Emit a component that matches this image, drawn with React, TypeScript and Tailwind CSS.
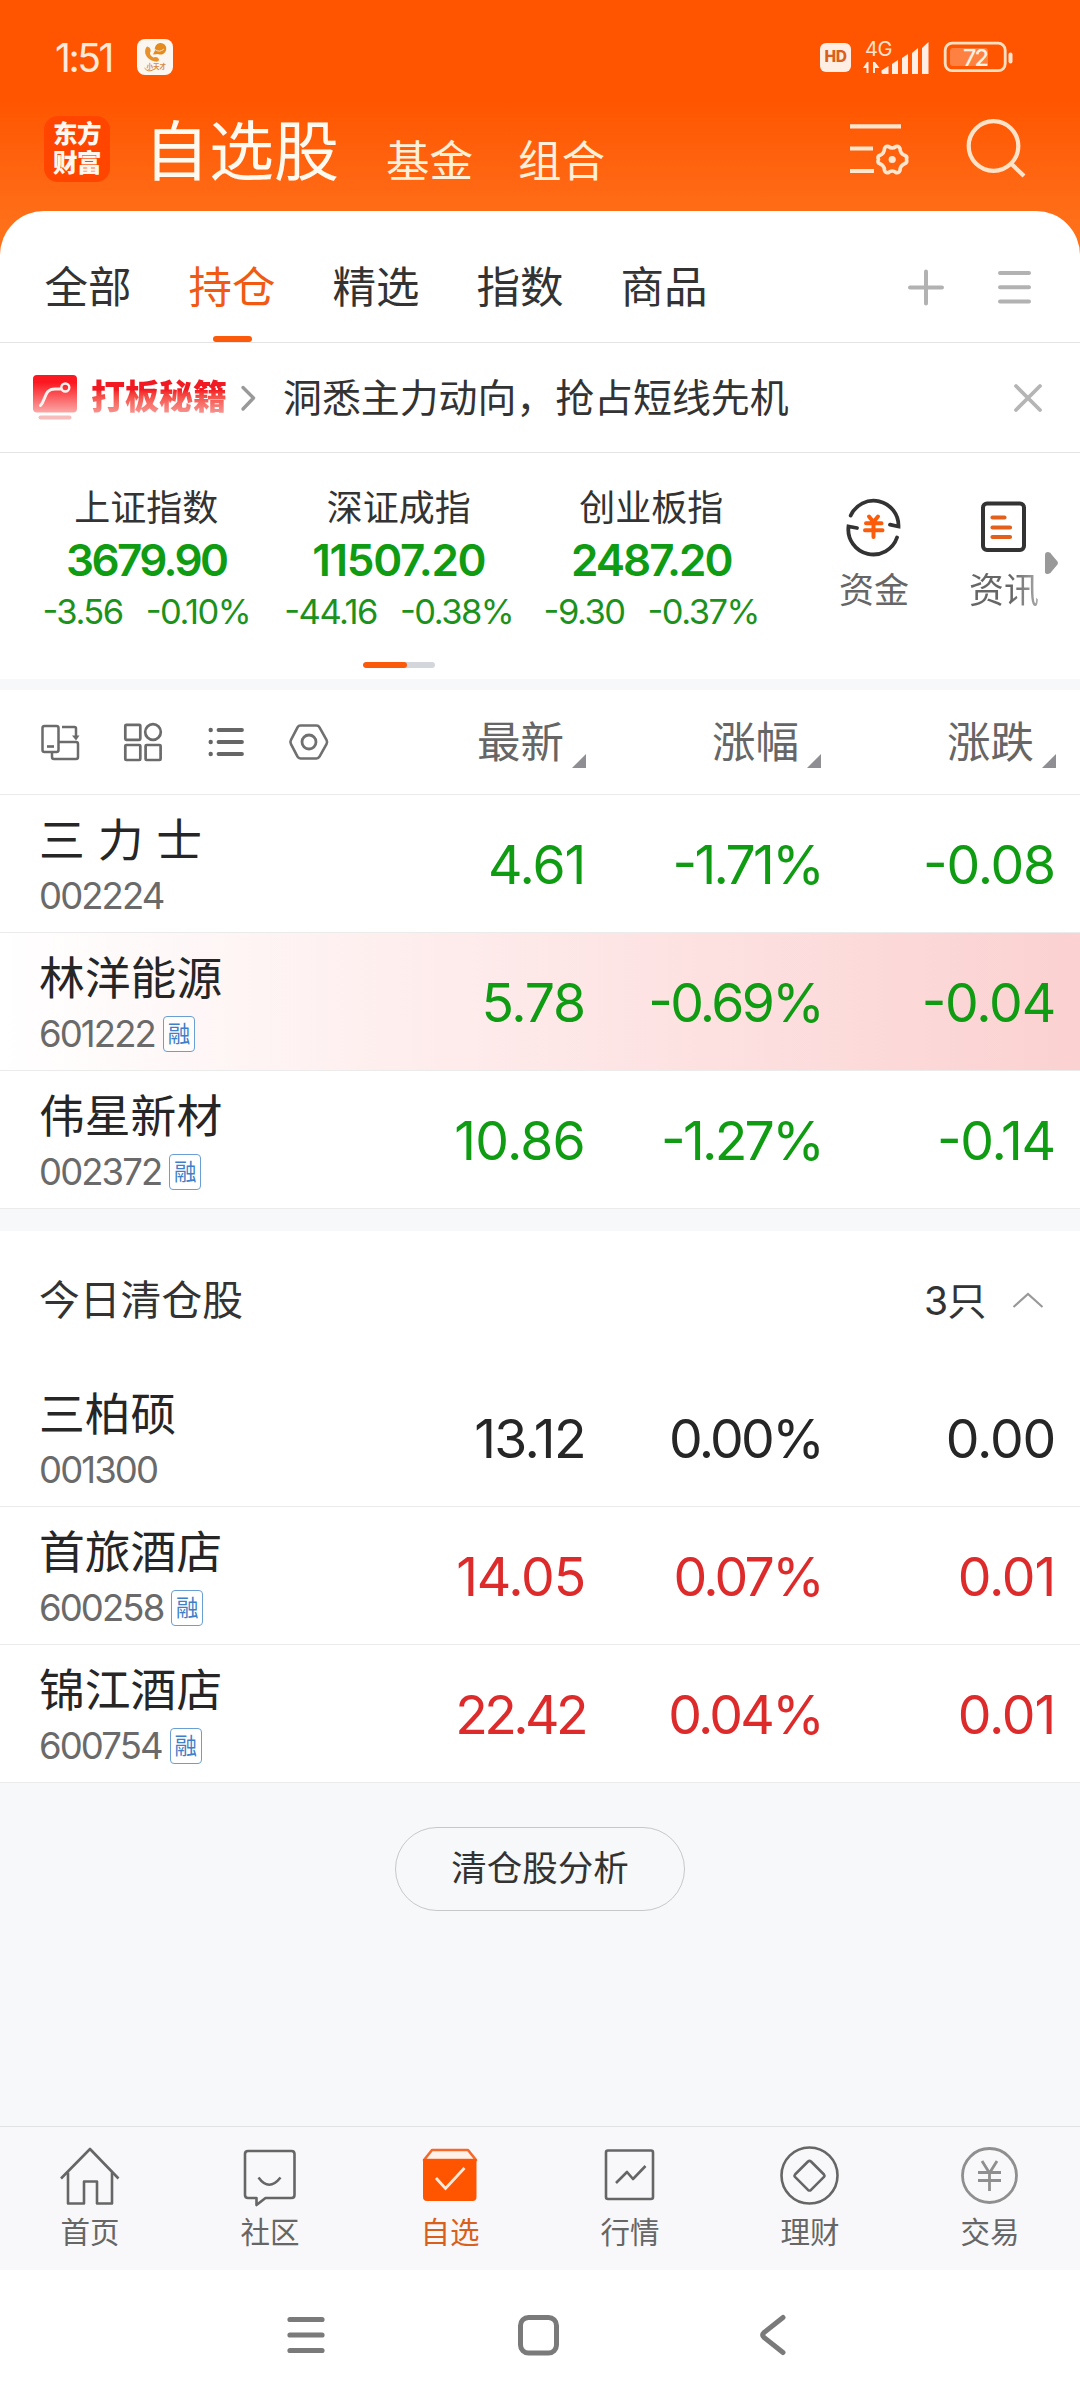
import React from "react";

type Tone = "down" | "flat" | "up";

interface Stock {
  name: string;
  code: string;
  margin?: boolean;
  last: string;
  pct: string;
  diff: string;
  tone: Tone;
  flash?: boolean;
  lastTracking?: string;
}

const holdings: Stock[] = [
  { name: "三 力 士", code: "002224", last: "4.61", pct: "-1.71%", diff: "-0.08", tone: "down" },
  { name: "林洋能源", code: "601222", margin: true, last: "5.78", pct: "-0.69%", diff: "-0.04", tone: "down", flash: true },
  { name: "伟星新材", code: "002372", margin: true, last: "10.86", pct: "-1.27%", diff: "-0.14", tone: "down", lastTracking: "tracking-[-0.8px]" },
];

const cleared: Stock[] = [
  { name: "三柏硕", code: "001300", last: "13.12", pct: "0.00%", diff: "0.00", tone: "flat", lastTracking: "tracking-[-1.6px]" },
  { name: "首旅酒店", code: "600258", margin: true, last: "14.05", pct: "0.07%", diff: "0.01", tone: "up" },
  { name: "锦江酒店", code: "600754", margin: true, last: "22.42", pct: "0.04%", diff: "0.01", tone: "up", lastTracking: "tracking-[-3.6px]" },
];

const toneClass: Record<Tone, string> = {
  down: "text-[#0f9b12]",
  flat: "text-[#262626]",
  up: "text-[#dd2a2a]",
};

interface GlyphProps {
  w: number;
  h: number;
  className?: string;
  children: React.ReactNode;
}

function Glyph({ w, h, className = "", children }: GlyphProps) {
  return (
    <svg width={w} height={h} viewBox={`0 0 ${w} ${h}`} fill="none" className={`block shrink-0 overflow-visible ${className}`}>
      {children}
    </svg>
  );
}

function StatusBar() {
  return (
    <div className="flex h-[100px] items-center pt-[14px] text-[#ffe9dc]">
      <span className="ml-[55px] w-[65px] whitespace-nowrap text-[39px] leading-none tracking-[-2.4px]">1:51</span>
      <Glyph w={36} h={36} className="ml-[17px]">
        <rect width="36" height="36" rx="8" fill="#fbf6f0" />
        <path d="M10 7.500c-3.500 4-2 10 3 13 4 2.500 8.500 3 9 .5 0-2.500-3.500-4-5.500-2.500-2.500-1-4-3.500-3.500-5 2-2-.500-6-3-6Z" fill="#e8902a" />
        <path d="M23 4a5.800 5.800 0 1 1-2 11l-5 .5 2-4a6 6 0 0 1 5-7.500Z" fill="#e58a1c" />
        <path d="M18 10.500q4.500 3.500 9-.500" stroke="#fbe2c0" strokeWidth="1" />
        <text x="9.500" y="30" fontSize="6.500" fontWeight="700" fill="#d98a3a" fontFamily="Noto Sans CJK SC">小天才</text>
        <path d="M7.500 29q4 5 9 1.500" stroke="#d98a3a" strokeWidth="1" />
      </Glyph>
      <div className="ml-[647px] flex h-[29px] w-[31px] items-center justify-center rounded-[6px] bg-[#ffeee4] text-[15.500px] font-extrabold leading-none tracking-[-0.3px] text-[#d9601c]">
        HD
      </div>
      <Glyph w={67} h={33} className="ml-[12px]">
        <text x="2" y="14.500" fontSize="20" fill="#ffe3cf" fontFamily="Inter" letterSpacing="-0.500">4G</text>
        <path d="M5.500 21v11h-2v-5L0 27l4-6ZM10 32V21h2l4.500 6H12v5Z" fill="#ffeee4" />
        <path d="M18.500 32v-2.500l7-4.500V33h-6ZM29 33V23l6-4v14ZM39 33V17l6-4v20ZM49 33V12l6-5v26ZM59 33V7l6.500-6v32Z" fill="#ffeee4" />
      </Glyph>
      <Glyph w={70} h={30} className="ml-[14px]">
        <rect x="1.200" y="1.200" width="60" height="27.500" rx="7" stroke="#ffdfc2" strokeWidth="2.800" />
        <rect x="6" y="6" width="38" height="18" rx="3" fill="#ff8141" />
        <path d="M66.500 12.500v7" stroke="#ffe3cf" strokeWidth="4" strokeLinecap="round" />
        <text x="31" y="23.500" fontSize="23.500" fontWeight="500" textAnchor="middle" fill="#fff1e4" fontFamily="Inter" letterSpacing="-2">72</text>
      </Glyph>
    </div>
  );
}

function TitleBar() {
  return (
    <div className="flex h-[111px] items-start">
      <div className="ml-[44px] mt-4 flex h-[66px] w-[66px] flex-col items-center justify-center gap-[2px] rounded-[14px] bg-[#ff4500] text-[24.500px] font-black text-[#fff8f0]">
        <span className="leading-[27px] tracking-[-0.5px]">东方</span>
        <span className="leading-[27px] tracking-[-0.5px]">财富</span>
      </div>
      <span className="ml-[34px] mt-[19px] w-[200px] whitespace-nowrap text-[65px] leading-none text-[#fffaf0]">自选股</span>
      <span className="ml-[42px] mt-[40px] w-[88px] whitespace-nowrap text-[43.500px] leading-none text-[#fff0da]">基金</span>
      <span className="ml-[44px] mt-[40px] w-[88px] whitespace-nowrap text-[43.500px] leading-none text-[#fff0da]">组合</span>
      <Glyph w={59} h={51} className="ml-[244px] mt-[24px]">
        <path d="M0 2.300h51M0 24.500h23M0 47h24" stroke="#ffe6cf" strokeWidth="4.200" />
        <path
          d="M38.500 22.500Q42.200 25.500 46 22.500Q48.500 21.500 50 24.500Q50 29.500 55 31.500Q57.500 32.500 56.500 35.500Q57.500 38.500 55 39.500Q50 41.500 50 46.500Q48.500 49.500 46 48.500Q42.200 45.500 38.500 48.500Q36 49.500 34.500 46.500Q34.500 41.500 29.500 39.500Q27 38.500 28.500 35.500Q27 32.500 29.500 31.500Q34.500 29.500 34.500 24.500Q36 21.500 38.500 22.500Z"
          stroke="#ffe6cf"
          strokeWidth="3.600"
          strokeLinejoin="round"
        />
        <circle cx="42.200" cy="35.500" r="3.600" fill="#ffe6cf" />
      </Glyph>
      <Glyph w={60} h={60} className="ml-[58px] mt-[18px]">
        <circle cx="26.500" cy="28" r="24.800" stroke="#ffe3c9" strokeWidth="4.200" />
        <path d="m43.500 45 13.500 13" stroke="#ffe3c9" strokeWidth="4.200" />
      </Glyph>
    </div>
  );
}

function GroupTabs() {
  const tabs = ["全部", "持仓", "精选", "指数", "商品"];
  return (
    <div className="flex h-[132px] border-b border-[#e4e4e4] pl-[16px]">
      {tabs.map((tab) => {
        const active = tab === "持仓";
        return (
          <div key={tab} className={`relative flex w-[144px] justify-center pt-[55px] text-[43.500px] leading-none ${active ? "text-[#f05a12]" : "text-[#333]"}`}>
            {tab}
            {active && <div className="absolute bottom-0 left-[53px] h-[6px] w-[39px] rounded-[3px] bg-[#fa5a0a]" />}
          </div>
        );
      })}
      <Glyph w={36} h={36} className="ml-[172px] mt-[58px]">
        <path d="M2 18.500h32M18 2.500v32" stroke="#b2b2b2" strokeWidth="4" strokeLinecap="round" />
      </Glyph>
      <Glyph w={34} h={36} className="ml-[54px] mt-[58px]">
        <path d="M2 4h29M2 18.300h29M2 32.600h29" stroke="#b2b2b2" strokeWidth="4" strokeLinecap="round" />
      </Glyph>
    </div>
  );
}

function PromoBar() {
  return (
    <div className="flex h-[110px] items-start border-b border-[#e4e4e4]">
      <Glyph w={45} h={46} className="ml-[33px] mt-[32px]">
        <defs>
          <linearGradient id="promo" x1="0" y1="0" x2="0" y2="1">
            <stop offset="0.200" stopColor="#fb1820" />
            <stop offset="1" stopColor="#fba8a6" />
          </linearGradient>
        </defs>
        <rect width="44" height="37.500" rx="4" fill="url(#promo)" />
        <path d="M7.500 30.500C13 25 11 14 22 14h6" stroke="#fff3f0" strokeWidth="3" strokeLinecap="round" />
        <circle cx="32.300" cy="12.500" r="4" stroke="#fff3f0" strokeWidth="2.400" />
        <rect x="5.500" y="40.500" width="33" height="4" rx="2" fill="#f7bcbc" />
      </Glyph>
      <span className="ml-[13px] mt-[36px] w-[138px] whitespace-nowrap bg-gradient-to-b from-[#f21a22] from-30% to-[#f79a98] bg-clip-text text-[34px] font-black leading-[36px] text-transparent">
        打板秘籍
      </span>
      <Glyph w={15} h={26} className="ml-[12px] mt-[42px]">
        <path d="m2 2.500 10.500 10.500L2 24" stroke="#999" strokeWidth="3.400" strokeLinecap="round" strokeLinejoin="round" />
      </Glyph>
      <span className="ml-[27px] mt-[36px] w-[510px] whitespace-nowrap text-[38.900px] leading-none text-[#333]">洞悉主力动向，抢占短线先机</span>
      <Glyph w={28} h={28} className="ml-[221px] mt-[41px]">
        <path d="M2 2 26 26M26 2 2 26" stroke="#b5b5b5" strokeWidth="3.800" strokeLinecap="round" />
      </Glyph>
    </div>
  );
}

const indices = [
  { name: "上证指数", value: "3679.90", diff: "-3.56", pct: "-0.10%", tracking: "tracking-[-2.6px]" },
  { name: "深证成指", value: "11507.20", diff: "-44.16", pct: "-0.38%", tracking: "tracking-[-1.3px]" },
  { name: "创业板指", value: "2487.20", diff: "-9.30", pct: "-0.37%", tracking: "tracking-[-2px]" },
];

function IndexStrip() {
  return (
    <div className="flex h-[226px] items-start">
      <div className="flex h-full w-[798px] flex-col overflow-hidden pl-[20px]">
        <div className="flex h-[209px]">
          {indices.map((item) => (
            <div key={item.name} className="flex w-[252.500px] shrink-0 flex-col items-center">
              <span className="mt-[37px] text-[36px] leading-none text-[#333]">{item.name}</span>
              <span className={`mt-[10px] whitespace-nowrap text-[44px] font-semibold leading-[48px] text-[#0f9b12] ${item.tracking}`}>{item.value}</span>
              <span className="mt-[10px] flex gap-[23px] whitespace-nowrap text-[34.500px] leading-[36px] tracking-[-1.5px] text-[#1c921d] [font-feature-settings:'case']">
                <span>{item.diff}</span>
                <span>{item.pct}</span>
              </span>
            </div>
          ))}
          <div className="ml-[20px] mt-[166px] h-[3px] w-px bg-[#5fb060]" />
        </div>
        <div className="ml-[343px] h-[6px] w-[72px] shrink-0 overflow-hidden rounded-full bg-[#d3d6da]">
          <div className="h-full w-[44px] rounded-full bg-[#fa5a0a]" />
        </div>
      </div>
      <div className="ml-[40px] flex w-[72px] flex-col items-center pt-[44px]">
        <Glyph w={58} h={58}>
          <path d="M5.700 18.500A25 25 0 0 1 53.500 29.500L45 27.700M52 40.500A25 25 0 0 1 3.500 29.500L12 31" stroke="#333" strokeWidth="3.800" strokeLinecap="round" strokeLinejoin="miter" />
          <path d="m24 19.500 4.500 5.500L33 19.500M21 26.300h15.500M20 33.300h17.500M28.500 26.300V40" stroke="#fb5c0c" strokeWidth="4" strokeLinecap="round" />
        </Glyph>
        <span className="mt-[18px] whitespace-nowrap text-[35px] leading-none text-[#666]">资金</span>
      </div>
      <div className="ml-[58px] flex w-[72px] flex-col items-center pt-[44px]">
        <Glyph w={58} h={58}>
          <rect x="8" y="6.500" width="41" height="46.500" rx="4" stroke="#333" strokeWidth="4" />
          <path d="M17.500 20.500h12M17.500 30.500h17.500M17.500 40h17.500" stroke="#e2601c" strokeWidth="4.200" strokeLinecap="round" />
        </Glyph>
        <span className="mt-[18px] whitespace-nowrap bg-gradient-to-r from-[#666] from-60% to-[#aaa] bg-clip-text text-[35px] leading-none text-transparent">资讯</span>
      </div>
      <Glyph w={14} h={23} className="ml-[5px] mt-[99px]">
        <path d="M0 3Q0 0 3 0 5.500 0 7 3l5.500 6.500q1 1.500 0 3L7 19q-1.500 3-4 3Q0 22 0 20Z" fill="#999" />
      </Glyph>
    </div>
  );
}

function Heading({ label, className }: { label: string; className: string }) {
  return (
    <div className={`flex items-start ${className}`}>
      <span className="mt-[31px] w-[88px] whitespace-nowrap text-[43.500px] leading-none text-[#666]">{label}</span>
      <Glyph w={14} h={14} className="ml-[7px] mt-[64px]">
        <path d="M14 0v14H0Z" fill="#8e8e93" />
      </Glyph>
    </div>
  );
}

function TableHead() {
  return (
    <div className="flex h-[105px] items-start border-b border-[#ebebeb]">
      <Glyph w={40} h={40} className="ml-[40px] mt-[33px]">
        <g stroke="#6b6b6b" strokeWidth="2.500">
          <rect x="2.500" y="3" width="16" height="26" rx="2" />
          <path d="M7 23.500h7" strokeWidth="2.600" />
          <path d="M22 4h12.500q1.500 0 1.500 1.500V13" />
          <path d="M19 19h17q2 0 2 2v13q0 2-2 2H14q-2 0-2-2v-5" />
        </g>
        <path d="M32 12.500h7.500L36 17.500Z" fill="#6b6b6b" />
      </Glyph>
      <Glyph w={40} h={40} className="ml-[43px] mt-[32px]">
        <g stroke="#6b6b6b" strokeWidth="2.700">
          <rect x="2.300" y="2.800" width="15" height="15" rx="1" />
          <circle cx="30" cy="10" r="7.800" />
          <rect x="2.300" y="23" width="15" height="15" rx="1" />
          <rect x="22.600" y="23" width="15" height="15" rx="1" />
        </g>
      </Glyph>
      <Glyph w={36} h={32} className="ml-[45px] mt-[36px]">
        <path d="M10.500 4h23.500M10.500 16h23.500M10.500 28h23.500" stroke="#666" strokeWidth="3.800" strokeLinecap="round" />
        <path d="M2.700 4h.01M2.700 16h.01M2.700 28h.01" stroke="#666" strokeWidth="4.400" strokeLinecap="round" />
      </Glyph>
      <Glyph w={40} h={38} className="ml-[45px] mt-[33px]">
        <path d="M11.500 2.500h16q2 0 3 1.800l7 12.500q1.200 2.200 0 4.400l-7 12.500q-1 1.800-3 1.800h-16q-2 0-3-1.800l-6.500-12.500q-1.200-2.200 0-4.400l6.500-12.500q1-1.800 3-1.800Z" stroke="#707070" strokeWidth="2.600" />
        <circle cx="20" cy="19" r="7" stroke="#707070" strokeWidth="2.800" />
      </Glyph>
      <Heading label="最新" className="ml-[148px]" />
      <Heading label="涨幅" className="ml-[126px]" />
      <Heading label="涨跌" className="ml-[126px]" />
    </div>
  );
}

function StockRow({ stock }: { stock: Stock }) {
  const tone = toneClass[stock.tone];
  return (
    <div className={`flex h-[138px] items-start border-b border-[#ebebeb] ${stock.flash ? "bg-gradient-to-r from-white to-[#fbd1d1]" : "bg-white"}`}>
      <div className="w-[300px] pl-[39px]">
        <div className="mt-[23px] whitespace-nowrap text-[45.800px] leading-none text-[#262626]">{stock.name}</div>
        <div className="mt-[13px] flex h-[38px] items-center">
          <span className="text-[36.500px] leading-none tracking-[-1.9px] text-[#6a6a6a]">{stock.code}</span>
          {stock.margin && (
            <span className="ml-[8px] flex h-[36px] w-[32px] items-center justify-center rounded-[4px] border-[1.500px] border-[#6a9fd4] bg-white/60 text-[22.500px] leading-none text-[#3f7fc8]">
              融
            </span>
          )}
        </div>
      </div>
      <span className={`mt-[43px] w-[285px] whitespace-nowrap text-right text-[53.500px] leading-none ${stock.lastTracking ?? "tracking-[-1.2px]"} ${tone}`}>{stock.last}</span>
      <span className={`mt-[43px] w-[237px] whitespace-nowrap text-right text-[53.500px] leading-none tracking-[-2.7px] [font-feature-settings:'case'] ${tone}`}>{stock.pct}</span>
      <span className={`mt-[43px] w-[233px] whitespace-nowrap text-right text-[53.500px] leading-none tracking-[-1.2px] [font-feature-settings:'case'] ${tone}`}>{stock.diff}</span>
    </div>
  );
}

function ClearedHead() {
  return (
    <div className="flex h-[138px] items-start">
      <span className="ml-[39px] mt-[49px] w-[210px] whitespace-nowrap text-[40.800px] leading-none text-[#333]">今日清仓股</span>
      <span className="ml-[675px] mt-[50px] w-[64px] whitespace-nowrap text-[39px] leading-none tracking-[-0.5px] text-[#333]">3只</span>
      <Glyph w={32} h={16} className="ml-[24px] mt-[61px]">
        <path d="M1.500 15 16 2l14.500 13" stroke="#999" strokeWidth="2.200" />
      </Glyph>
    </div>
  );
}

const navItems: { label: string; icon: React.ReactNode }[] = [
  {
    label: "首页",
    icon: (
      <g stroke="#666" strokeWidth="2.600" strokeLinejoin="round">
        <path d="M1 32.500 30 3l28.500 29.500" />
        <path d="M8 26.500V57.500h16V35.500h13v22h15V26.500" />
      </g>
    ),
  },
  {
    label: "社区",
    icon: (
      <g stroke="#666" strokeWidth="2.600" strokeLinejoin="round">
        <path d="M8 5h43.500q3 0 3 3v41q0 3-3 3H25.500l-9 7v-7H8q-3 0-3-3V8q0-3 3-3Z" />
        <path d="M18.500 31.500q10.500 14.500 22 0" />
      </g>
    ),
  },
  {
    label: "自选",
    icon: (
      <g>
        <path d="M4 14 12 4h36l8 10Z" stroke="#f5692a" strokeWidth="2.600" strokeLinejoin="round" fill="#fff1ea" />
        <path d="M3 13h53.500v38q0 4-4 4h-45.500q-4 0-4-4Z" fill="#ff5500" />
        <path d="m16 32 9.500 10.500L44.500 22" stroke="#ffeadb" strokeWidth="2.800" />
      </g>
    ),
  },
  {
    label: "行情",
    icon: (
      <g stroke="#666" strokeWidth="2.600" strokeLinejoin="round">
        <rect x="6" y="4.500" width="47" height="48.500" rx="2" />
        <path d="m16 37 11-11 6 7 12.500-13" />
      </g>
    ),
  },
  {
    label: "理财",
    icon: (
      <g stroke="#666" strokeWidth="2.600" strokeLinejoin="round">
        <circle cx="29.500" cy="29.500" r="28" />
        <path d="m28 15.500q1.500-1.200 3 0l13 13q1 1.200 0 2.400l-13 13q-1.500 1.200-3 0l-13-13q-1-1.200 0-2.400Z" />
      </g>
    ),
  },
  {
    label: "交易",
    icon: (
      <g stroke="#8f8f8f" strokeWidth="2.800">
        <circle cx="29.500" cy="29.500" r="27" />
        <path d="m22 15 7.500 12 7.500-12M18 26.500h23M18 34.500h23M29.500 26v19" />
      </g>
    ),
  },
];

function BottomNav() {
  return (
    <div className="flex h-[144px] border-t border-[#e1e2e4] bg-[#f8f8fa]">
      {navItems.map((item) => (
        <div key={item.label} className="flex w-[180px] flex-col items-center pt-[19px]">
          <Glyph w={60} h={60}>{item.icon}</Glyph>
          <span className={`mt-[12px] text-[29.500px] leading-none ${item.label === "自选" ? "text-[#d9601c]" : "text-[#666]"}`}>{item.label}</span>
        </div>
      ))}
    </div>
  );
}

function SystemNav() {
  return (
    <div className="flex h-[130px] items-start bg-white">
      <Glyph w={40} h={42} className="ml-[286px] mt-[44px]">
        <path d="M4 5.500h32M4 21h32M4 36.500h32" stroke="#7a7a7a" strokeWidth="5.200" strokeLinecap="round" />
      </Glyph>
      <Glyph w={42} h={42} className="ml-[192px] mt-[44px]">
        <rect x="2.500" y="3.500" width="36" height="35.500" rx="8" stroke="#7a7a7a" strokeWidth="5" />
      </Glyph>
      <Glyph w={28} h={42} className="ml-[199px] mt-[44px]">
        <path d="M24 3.500 5 18.500Q2.500 21 5 23.500L24 38.500" stroke="#7a7a7a" strokeWidth="5" strokeLinecap="round" />
      </Glyph>
    </div>
  );
}

export default function App() {
  return (
    <div className="flex h-[2400px] w-[1080px] flex-col overflow-hidden bg-[#f7f8fa] font-['Inter','Noto_Sans_CJK_SC',sans-serif]">
      <div className="bg-gradient-to-b from-[#ff5500] from-[100px] to-[#ff7019] to-[230px]">
        <StatusBar />
        <TitleBar />
        <div className="rounded-t-[44px] bg-white">
          <GroupTabs />
        </div>
      </div>
      <div className="bg-white">
        <PromoBar />
        <IndexStrip />
      </div>
      <div className="mt-[11px] bg-white">
        <TableHead />
        {holdings.map((stock) => (
          <StockRow key={stock.code} stock={stock} />
        ))}
      </div>
      <div className="mt-[22px] bg-white">
        <ClearedHead />
        {cleared.map((stock) => (
          <StockRow key={stock.code} stock={stock} />
        ))}
      </div>
      <div className="flex flex-1 items-start justify-center pt-[44px]">
        <button className="flex h-[84px] w-[290px] items-center justify-center rounded-full border border-[#c6c8cc] text-[35.500px] leading-none text-[#333]">
          清仓股分析
        </button>
      </div>
      <BottomNav />
      <SystemNav />
    </div>
  );
}
